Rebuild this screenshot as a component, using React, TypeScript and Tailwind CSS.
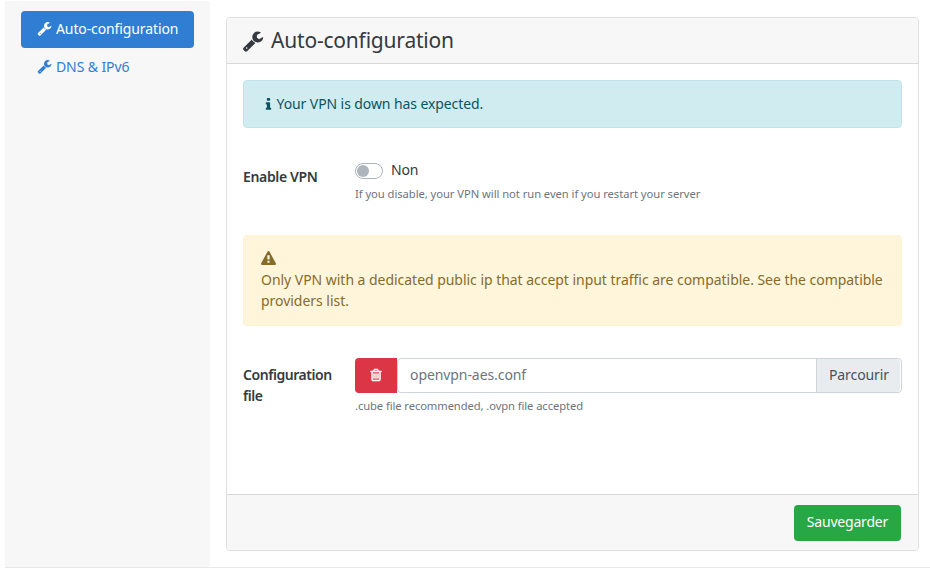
import React from "react";

const paths = {
  wrench:
    "M448 1472q0-26-19-45t-45-19-45 19-19 45 19 45 45 19 45-19 19-45zm644-420l-682 682q-37 37-90 37-52 0-91-37l-106-108q-38-36-38-90 0-53 38-91l681-681q39 98 114.5 173.5t173.5 114.5zm634-435q0 39-23 106-47 134-164.5 217.5t-258.5 83.5q-185 0-316.5-131.5t-131.5-316.5 131.5-316.5 316.5-131.5q58 0 121.5 16.5t107.5 46.5q16 11 16 28t-16 28l-293 169v224l193 107q5-3 79-48.5t135.5-81 70.5-35.5q15 0 23.5 10t8.5 25z",
  info: "M1216 1344v128q0 26-19 45t-45 19h-512q-26 0-45-19t-19-45v-128q0-26 19-45t45-19h64v-384h-64q-26 0-45-19t-19-45v-128q0-26 19-45t45-19h384q26 0 45 19t19 45v576h64q26 0 45 19t19 45zm-128-1152v192q0 26-19 45t-45 19h-256q-26 0-45-19t-19-45v-192q0-26 19-45t45-19h256q26 0 45 19t19 45z",
  warning:
    "M1024 1375v-190q0-14-9.5-23.5t-22.5-9.5h-192q-13 0-22.5 9.5t-9.5 23.5v190q0 14 9.5 23.5t22.5 9.5h192q13 0 22.5-9.5t9.5-23.5zm-2-374l18-459q0-12-10-19-13-11-24-11h-220q-11 0-24 11-10 7-10 21l17 457q0 10 10 16.5t24 6.5h185q14 0 23.5-6.5t10.5-16.5zm-14-934l768 1408q35 63-2 126-17 29-46.5 46t-63.5 17h-1536q-34 0-63.5-17t-46.5-46q-37-63-2-126l768-1408q17-31 47-49t65-18 65 18 47 49z",
  trash:
    "M704 736v576q0 14-9 23t-23 9h-64q-14 0-23-9t-9-23v-576q0-14 9-23t23-9h64q14 0 23 9t9 23zm256 0v576q0 14-9 23t-23 9h-64q-14 0-23-9t-9-23v-576q0-14 9-23t23-9h64q14 0 23 9t9 23zm256 0v576q0 14-9 23t-23 9h-64q-14 0-23-9t-9-23v-576q0-14 9-23t23-9h64q14 0 23 9t9 23zm128 724v-948h-896v948q0 22 7 40.5t14.5 27 10.5 8.5h832q3 0 10.5-8.5t14.5-27 7-40.5zm-672-1076h448l-48-117q-7-9-17-11h-317q-10 2-17 11zm928 32v64q0 14-9 23t-23 9h-96v948q0 83-47 143.5t-113 60.5h-832q-66 0-113-58.5t-47-141.5v-952h-96q-14 0-23-9t-9-23v-64q0-14 9-23t23-9h309l70-167q15-37 54-63t79-26h320q40 0 79 26t54 63l70 167h309q14 0 23 9t9 23z",
};

function Icon({ name, className = "" }: { name: keyof typeof paths; className?: string }) {
  return (
    <svg viewBox="0 0 1792 1792" fill="currentColor" aria-hidden="true" className={`shrink-0 ${className}`}>
      <path d={paths[name]} />
    </svg>
  );
}

export default function App() {
  return (
    <div className="h-[569px] w-[930px] overflow-hidden bg-white pl-[5px] pt-px font-['Noto_Sans',sans-serif] text-[14px] leading-[21px] text-[#343a40]">
      <div className="flex h-[567px] border-b border-[#e8e8e8]">
        <nav className="w-[205px] bg-[#f7f7f7] px-4 pt-2.5">
          <a className="flex h-[37px] w-[173px] items-center rounded bg-[#2f7ed3] pb-0.5 pl-4 text-white">
            <Icon name="wrench" className="mr-1 size-[15px]" />
            <span className="whitespace-nowrap tracking-[-0.11px]">Auto-configuration</span>
          </a>
          <a className="mt-px flex h-[37px] w-[173px] items-center pb-0.5 pl-4 text-[#2f7ed3]">
            <Icon name="wrench" className="mr-1 size-[15px]" />
            <span className="whitespace-nowrap tracking-[-0.1px]">DNS &amp; IPv6</span>
          </a>
        </nav>

        <main className="ml-4 mt-4 flex h-[534px] w-[693px] flex-col overflow-hidden rounded border border-[#dfdfdf]">
          <header className="flex h-[46px] shrink-0 items-center border-b border-[#d9d9d9] bg-[#f7f7f7] pl-[15px]">
            <Icon name="wrench" className="mr-[7px] size-[22px]" />
            <h2 className="whitespace-nowrap text-[21px] leading-[25px] tracking-[-0.2px]">Auto-configuration</h2>
          </header>

          <section className="flex-1 px-4 pt-4">
            <div className="flex h-12 items-center rounded border border-[#bee5eb] bg-[#d1ecf1] pl-[17px] text-[#0c5460]">
              <Icon name="info" className="mr-[0.5px] size-[15px]" />
              <span className="pb-0.5 whitespace-nowrap tracking-[-0.09px]">Your VPN is down has expected.</span>
            </div>

            <div className="mt-8 flex h-[75px]">
              <div className="w-[112px] pt-1.5 font-semibold whitespace-nowrap tracking-[-0.35px]">Enable VPN</div>
              <div>
                <div className="flex h-[21px] items-center">
                  <span className="mr-2 flex h-4 w-7 items-center rounded-full border border-[#adb5bd] pl-px">
                    <span className="size-3 rounded-full bg-[#adb5bd]" />
                  </span>
                  <span className="pb-0.5 tracking-[-0.2px]">Non</span>
                </div>
                <p className="mt-1 text-[11.2px] leading-[17px] whitespace-nowrap tracking-[-0.04px] text-[#6c757d]">
                  If you disable, your VPN will not run even if you restart your server
                </p>
              </div>
            </div>

            <div className="h-[91px] rounded border border-[#fff2d2] bg-[#fff5db] px-[17px] pt-3 text-[#856c2b]">
              <div className="flex h-[21px] items-center">
                <Icon name="warning" className="size-[15px]" />
              </div>
              <p className="whitespace-nowrap tracking-[-0.035px]">
                Only VPN with a dedicated public ip that accept input traffic are compatible. See the compatible
                <br />
                providers list.
              </p>
            </div>

            <div className="mt-8 flex">
              <div className="w-[112px] shrink-0 pt-1.5 font-semibold tracking-[-0.45px]">
                Configuration
                <br />
                file
              </div>
              <div className="flex-1">
                <div className="flex h-[35px]">
                  <button className="flex w-[42px] items-center justify-center rounded-l bg-[#dc3545] pb-px text-white">
                    <Icon name="trash" className="size-3.5 stroke-white stroke-[70]" />
                  </button>
                  <div className="flex flex-1 items-center rounded border border-[#ced4da] pl-3 text-[#6c757d]">
                    <span className="flex-1 pb-0.5 tracking-[-0.08px]">openvpn-aes.conf</span>
                    <span className="mr-px flex h-full w-[84px] items-center rounded-r border-l border-[#ced4da] bg-[#e9ecef] pb-0.5 pl-3 tracking-[-0.1px] text-[#495057]">
                      Parcourir
                    </span>
                  </div>
                </div>
                <p className="mt-1 text-[11.2px] leading-[17px] whitespace-nowrap tracking-[-0.08px] text-[#6c757d]">
                  .cube file recommended, .ovpn file accepted
                </p>
              </div>
            </div>
          </section>

          <footer className="flex h-14 shrink-0 items-start justify-end border-t border-[#d9d9d9] bg-[#f7f7f7] pt-2.5 pr-[17px]">
            <button className="h-9 w-[107px] rounded bg-[#28a745] pb-[3px] whitespace-nowrap tracking-[-0.2px] text-white">Sauvegarder</button>
          </footer>
        </main>
      </div>
    </div>
  );
}
